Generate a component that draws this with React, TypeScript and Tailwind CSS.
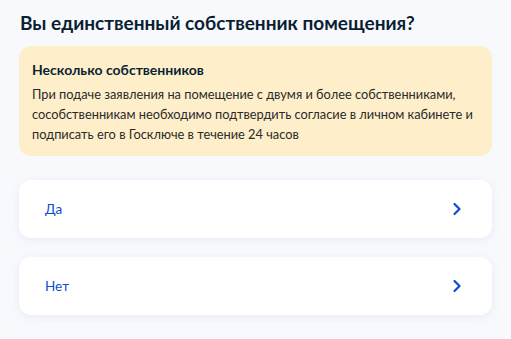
import React from "react";

function Chevron() {
  return (
    <svg width="10" height="14" viewBox="0 0 10 14" fill="none">
      <path d="M2.5 2 L7.5 7 L2.5 12" stroke="#0d4cd3" strokeWidth="2.2" strokeLinecap="round" strokeLinejoin="round" />
    </svg>
  );
}

function Option({ label }: { label: string }) {
  return (
    <div className="flex items-center justify-between h-[58px] rounded-[12px] bg-white pl-[26px] pr-[30px] shadow-[0_2px_8px_rgba(160,180,220,0.18)]">
      <span className="text-[13.5px] text-[#0d4cd3]">{label}</span>
      <Chevron />
    </div>
  );
}

export default function App() {
  return (
    <div className="w-[511px] h-[339px] bg-[#f8f9fd] px-[19px] pt-[10px] font-['Lato','Noto_Sans',sans-serif] text-[#0b1f33]">
      <h1 className="text-[19px] font-bold leading-[25px] ml-[1px]">Вы единственный собственник помещения?</h1>
      <div className="mt-[11px] rounded-[12px] bg-[#feefca] pl-[13px] pr-[6px] pt-[14px] pb-[12px]">
        <div className="text-[14px] font-bold leading-[20px]">Несколько собственников</div>
        <p className="mt-[4px] text-[12.8px] leading-[20px] text-[#2a2a2a]">
          При подаче заявления на помещение с двумя и более собственниками, сособственникам необходимо подтвердить согласие в личном кабинете и подписать его в Госключе в течение 24 часов
        </p>
      </div>
      <div className="mt-[24px] flex flex-col gap-[19px]">
        <Option label="Да" />
        <Option label="Нет" />
      </div>
    </div>
  );
}
